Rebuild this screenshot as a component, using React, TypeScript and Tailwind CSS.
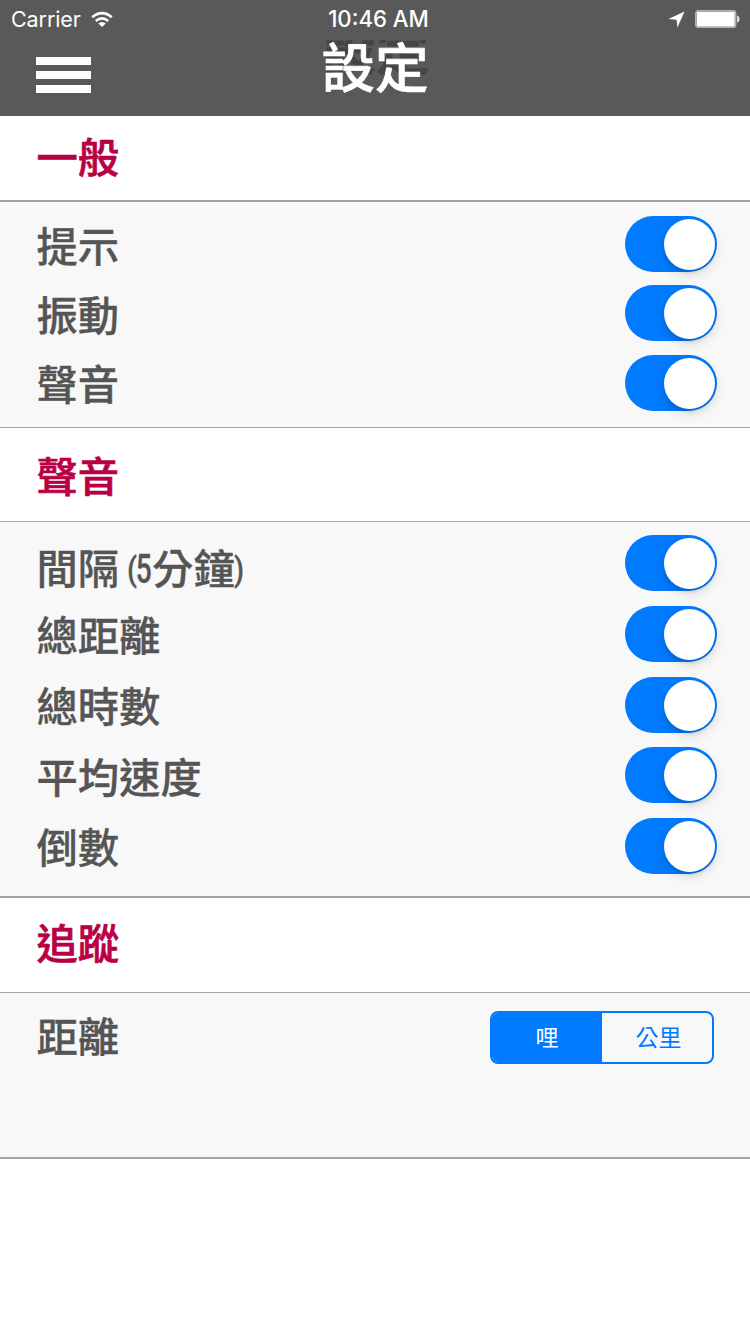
import type { ReactNode } from "react";

function Toggle() {
  return (
    <span
      role="switch"
      aria-checked="true"
      className="flex h-[56px] w-[92px] shrink-0 items-center justify-end rounded-full bg-[#007aff] pr-[2.5px]"
    >
      <span className="h-[51px] w-[51px] rounded-full bg-white shadow-[0_4px_12px_rgba(0,0,0,0.15),0_3px_3px_rgba(0,0,0,0.08)]" />
    </span>
  );
}

function Row({ label, className, labelClass = "" }: { label: ReactNode; className: string; labelClass?: string }) {
  return (
    <div className={`flex h-[56px] items-start justify-between ${className}`}>
      <span
        className={`text-[41.3px] leading-[56px] font-medium whitespace-nowrap text-[#555555] [-webkit-text-stroke:0.3px_#555555] ${labelClass}`}
      >
        {label}
      </span>
      <Toggle />
    </div>
  );
}

function Heading({ children, className }: { children: ReactNode; className: string }) {
  return (
    <h2
      className={`bg-white pl-[36.5px] text-[41.3px] leading-[56px] font-medium text-[#b90045] [-webkit-text-stroke:0.7px_#b90045] ${className}`}
    >
      {children}
    </h2>
  );
}

function Narrow({ children, className, glyphClass }: { children: string; className: string; glyphClass: string }) {
  return (
    <span className={`inline-flex justify-center font-[Roboto] leading-none ${className}`}>
      <span className={`inline-block ${glyphClass}`}>{children}</span>
    </span>
  );
}

export default function App() {
  return (
    <div
      lang="zh-TW"
      className="flex h-[1334px] w-[750px] flex-col overflow-hidden bg-white font-['Noto_Sans_CJK_TC',sans-serif]"
    >
      <header className="h-[116px] shrink-0 bg-[#595959] text-white">
        <div className="grid h-[38px] grid-cols-[1fr_auto_1fr] items-center pr-[10px] pl-[11px] font-[Inter,sans-serif]">
          <div className="flex items-center gap-[10px]">
            <span className="text-[21.5px] tracking-[-0.1px]">Carrier</span>
            <svg width="22" height="17" viewBox="0 0 23 17" fill="none" stroke="white" strokeWidth="2.8">
              <path d="M1.3 6.2Q11.5 -2.4 21.7 6.2" />
              <path d="M5 10Q11.5 4.7 18 10" />
              <path d="M11.5 16.3L7.6 12.6Q11.5 9.4 15.4 12.6Z" fill="white" stroke="none" />
            </svg>
          </div>
          <div className="ml-[6px] text-[22.2px] leading-[24px] font-medium whitespace-nowrap">10:46 AM</div>
          <div className="flex items-center justify-end gap-[10px]">
            <svg width="17" height="17" viewBox="0 0 17 17">
              <path d="M16.5 .5L9.5 16.5L8.6 8.8L.5 8Z" fill="white" />
            </svg>
            <svg width="45" height="18" viewBox="0 0 45 18">
              <rect x=".7" y=".7" width="40" height="16.6" rx="2.5" fill="#595959" stroke="#b4b4b4" strokeWidth="1.4" />
              <rect x="1.7" y="1.8" width="38" height="14.6" rx="1" fill="white" />
              <path d="M42 5.5Q44.6 6 44.6 9T42 12.5Z" fill="#dedede" />
            </svg>
          </div>
        </div>
        <div className="grid h-[78px] grid-cols-[1fr_auto_1fr] items-start">
          <button aria-label="Menu" className="mt-[18.5px] ml-[36px] flex w-[55px] flex-col gap-[5.5px]">
            <span className="h-[8.5px] w-full bg-white" />
            <span className="h-[8.5px] w-full bg-white" />
            <span className="h-[8.5px] w-full bg-white" />
          </button>
          <div className="relative mt-[2px] h-[76px] overflow-hidden px-1 text-[53.5px] leading-[56px] font-medium">
            <span
              aria-hidden="true"
              className="absolute top-[-21px] left-[5px] text-[#454545] [-webkit-text-stroke:1px_#454545]"
            >
              設定
            </span>
            <h1 className="relative mt-[-3px] [-webkit-text-stroke:0.7px_white]">設定</h1>
          </div>
          <span />
        </div>
      </header>

      <Heading className="h-[84px] pt-[11px]">一般</Heading>
      <section className="flex h-[228px] flex-col border-t-2 border-b-[1.5px] border-[#a3a3a3] bg-[#f8f8f8] pr-[33px] pl-[36.5px]">
        <Row label="提示" className="mt-[14px]" />
        <Row label="振動" className="mt-[13px]" />
        <Row label="聲音" className="mt-[14px]" labelClass="mt-[-1px]" />
      </section>

      <Heading className="h-[93px] pt-[18px]">聲音</Heading>
      <section className="flex h-[377px] flex-col border-t border-b-2 border-[#a3a3a3] bg-[#f8f8f8] pr-[33px] pl-[36.5px]">
        <Row
          label={
            <>
              間隔
              <Narrow className="ml-[8px] w-[9px]" glyphClass="text-[34px] scale-x-[0.85] translate-y-[-3px]">(</Narrow>
              <Narrow className="w-[16px]" glyphClass="scale-x-[0.68] translate-y-[-1px]">5</Narrow>
              分鐘
              <Narrow className="w-[8px]" glyphClass="text-[34px] scale-x-[0.85] translate-y-[-3px]">)</Narrow>
            </>
          }
          className="mt-[13px]"
          labelClass="mt-[3px]"
        />
        <Row label="總距離" className="mt-[15px]" labelClass="mt-[-1px]" />
        <Row label="總時數" className="mt-[15px]" labelClass="mt-[-1px]" />
        <Row label="平均速度" className="mt-[14px]" />
        <Row label="倒數" className="mt-[15px]" labelClass="mt-[-1px]" />
      </section>

      <Heading className="h-[94px] pt-[15px]">追蹤</Heading>
      <section className="flex h-[167px] items-start justify-between border-t border-b-2 border-[#a3a3a3] bg-[#f8f8f8] pr-[36px] pl-[36.5px]">
        <span className="mt-[13px] text-[41.3px] leading-[56px] font-medium text-[#555555] [-webkit-text-stroke:0.3px_#555555]">
          距離
        </span>
        <div className="mt-[18px] grid h-[53px] w-[224px] grid-cols-2 overflow-hidden rounded-[8px] border-2 border-[#007aff] text-center text-[23px] leading-[46px] font-normal">
          <button className="bg-[#007aff] pb-[3px] text-white">哩</button>
          <button className="pb-[3px] pl-[3px] text-[#007aff]">公里</button>
        </div>
      </section>
    </div>
  );
}
